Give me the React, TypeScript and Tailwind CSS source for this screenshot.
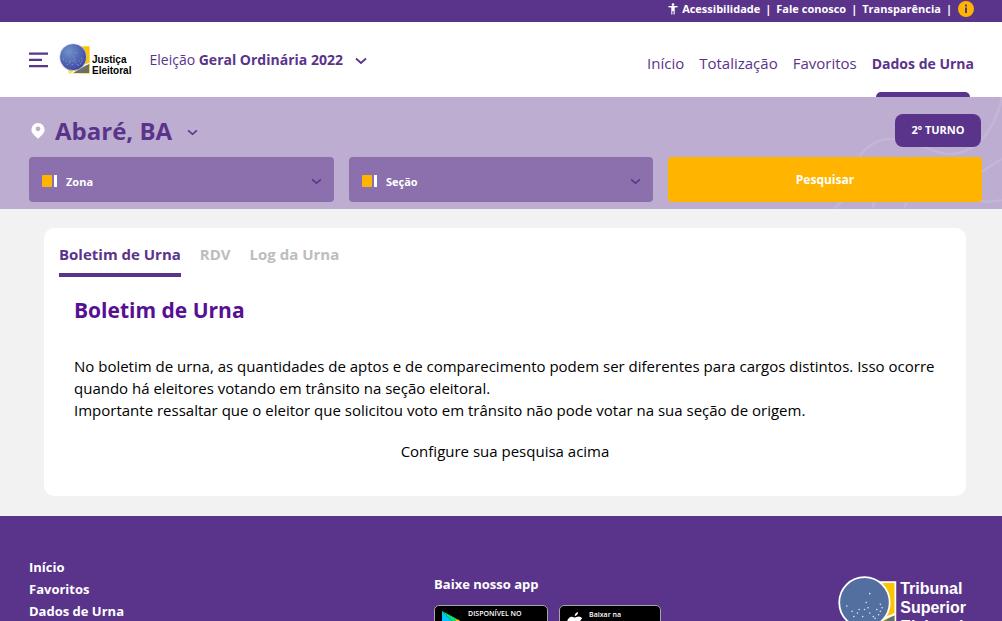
import type { ReactNode } from "react";

function Chevron({ className }: { className: string }) {
  return (
    <svg viewBox="0 0 12 8" className={className} fill="none" stroke="currentColor" strokeWidth="1.800" aria-hidden="true">
      <path d="M1 1.500 6 6l5-4.500" />
    </svg>
  );
}

const stars = [
  [8, 20], [11, 21], [15, 19], [14, 23], [18, 21], [20, 23], [22, 19], [23, 22], [24, 20], [25, 18],
  [16, 15], [17, 18], [9, 23], [5, 17], [18, 10], [21, 24], [24, 16], [12, 19],
];

function Emblem({ id, className, outline }: { id: string; className: string; outline?: boolean }) {
  return (
    <svg viewBox="0 0 34 34" className={className} aria-hidden="true">
      <defs>
        <linearGradient id={`${id}-gold`} x1="0" y1="0" x2="1" y2="0">
          <stop offset="0.300" stopColor="#fede55" />
          <stop offset="0.800" stopColor="#fcc400" />
        </linearGradient>
        <radialGradient id={`${id}-globe`} cx="0.350" cy="0.300" r="0.800">
          <stop offset="0" stopColor="#7092cc" />
          <stop offset="1" stopColor="#39409a" />
        </radialGradient>
      </defs>
      <path d="M10 3.500h22.500v29H10z" fill={`url(#${id}-gold)`} stroke={outline ? "#fff" : "none"} />
      <path d="M32 22v10H15z" fill="#64716e" />
      <path d="M32.500 21.500C25 24 20 27 13 32.500" fill="none" stroke="#fff" strokeWidth="1.200" />
      <circle cx="15" cy="15" r="14.300" fill={outline ? "#536f9f" : `url(#${id}-globe)`} stroke="#fff" strokeWidth={outline ? 1 : 0.500} />
      {stars.map(([x, y]) => (
        <circle key={`${x}-${y}`} cx={x} cy={y} r="0.450" fill="#dfe9f5" />
      ))}
    </svg>
  );
}

function FilterSelect({ label }: { label: string }) {
  return (
    <div className="relative flex h-[45px] items-center rounded-[4px] bg-[#8b70ad]">
      <span className="pointer-events-none absolute left-[13px] flex gap-[2px] pt-[3px]">
        <span className="h-3 w-[10px] rounded-[1px] bg-[#ffb400]" />
        <span className="h-3 w-[3px] bg-white" />
      </span>
      <select aria-label={label} className="h-full w-full appearance-none bg-transparent pt-[5px] pr-8 pl-[37px] text-[11px] font-bold text-white">
        <option>{label}</option>
      </select>
      <Chevron className="pointer-events-none absolute right-3 mt-[3px] h-[7px] w-[11px] text-[#5a348a]" />
    </div>
  );
}

function TopLink({ children }: { children: ReactNode }) {
  return <a href="#" className="whitespace-nowrap">{children}</a>;
}

function StoreBadge({ small, name, className, children }: { small: string; name: string; className: string; children: ReactNode }) {
  return (
    <a href="#" className={`flex h-[34px] items-start rounded-[5px] border border-[#a6a6a6] bg-black text-white ${className}`}>
      {children}
      <span className="flex flex-col">
        <span className="text-[7px] leading-[9px] font-semibold whitespace-nowrap">{small}</span>
        <span className="text-[15px] leading-[16px] font-semibold whitespace-nowrap">{name}</span>
      </span>
    </a>
  );
}

export default function App() {
  return (
    <div className="flex h-screen flex-col overflow-y-auto bg-[#f2f2f2] font-['Open_Sans',sans-serif] text-[#5a348a] [scrollbar-width:none]">
      <div className="flex h-[22px] shrink-0 items-center justify-end gap-[5px] bg-[#5a348a] pr-7 pb-1 text-[11px] font-bold text-white">
        <a href="#" className="flex items-center gap-1">
          <svg viewBox="0 0 10 12" className="h-3 w-[10px]" fill="currentColor" aria-hidden="true">
            <circle cx="5" cy="1.600" r="1.300" />
            <path d="M0.400 3h9.200v1.200L6.700 4.600V11.500H5.600V8H4.400v3.500H3.300V4.600L0.400 4.200z" />
          </svg>
          Acessibilidade
        </a>
        <span>|</span>
        <TopLink>Fale conosco</TopLink>
        <span>|</span>
        <TopLink>Transparência</TopLink>
        <span>|</span>
        <button aria-label="Informações" className="ml-px">
          <svg viewBox="0 0 16 16" className="size-4" aria-hidden="true">
            <circle cx="8" cy="8" r="8" fill="#ffb400" />
            <path d="M7 3.500h2v2H7zM7 6.500h2v5.500H7z" fill="#5a348a" />
          </svg>
        </button>
      </div>

      <header className="flex h-[75px] shrink-0 justify-between bg-white pr-7 pl-[29px]">
        <div className="flex items-center">
          <button aria-label="Menu">
            <svg viewBox="0 0 19 16" className="h-4 w-[19px]" fill="currentColor" aria-hidden="true">
              <path d="M0 0.500h19v2.200H0zM0 6.800h13v2.200H0zM0 13h19v2.200H0z" />
            </svg>
          </button>
          <a href="#" className="ml-[11px] flex items-center pb-px text-black">
            <Emblem id="header" className="size-8" />
            <span className="pt-3 pl-px font-['Liberation_Sans',sans-serif] text-[10px] leading-[11px] font-bold">
              Justiça<br />Eleitoral
            </span>
          </a>
          <button className="ml-[18px] flex items-center gap-3 text-[14px]">
            <span>Eleição <b>Geral Ordinária 2022</b></span>
            <Chevron className="mt-[3px] h-[8px] w-3" />
          </button>
        </div>
        <nav className="flex items-stretch gap-[15px] text-[15px] whitespace-nowrap">
          <a href="#" className="flex items-center pt-2">Início</a>
          <a href="#" className="flex items-center pt-2">Totalização</a>
          <a href="#" className="flex items-center pt-2">Favoritos</a>
          <a href="#" className="relative flex items-center pt-2 text-[14px] font-bold">
            Dados de Urna
            <span className="absolute inset-x-1 bottom-0 h-[5px] rounded-t-[5px] bg-[#5a348a]" />
          </a>
        </nav>
      </header>

      <section className="relative shrink-0 bg-[#bdadd1] pr-5 pb-[7px] pl-[29px]">
        <svg viewBox="0 0 180 112" className="absolute top-0 right-0 h-28 w-[180px]" fill="none" stroke="#c4b6d7" strokeWidth="2.500" aria-hidden="true">
          <path d="M36 62C46 45 64 37 88 45S123 62 143 54 175 24 180 0M12 112C27 98 35 84 50 75M50 112C56 91 68 80 82 76S113 89 135 85 164 70 180 62M82 112C91 86 112 87 128 94S158 108 180 103" />
        </svg>
        <div className="relative flex h-[60px] items-center justify-between pt-[7px] pr-px">
          <button className="flex items-center text-[24px] font-bold">
            <svg viewBox="0 0 14 16" className="ml-[2px] h-4 w-[14px] text-white" aria-hidden="true">
              <path fillRule="evenodd" d="M7 0a6.600 6.600 0 0 0-6.600 6.600C0.400 10 3.200 12.500 7 15.800c3.800-3.300 6.600-5.800 6.600-9.200A6.600 6.600 0 0 0 7 0zm0 3.400a2.400 2.400 0 1 1 0 4.800 2.400 2.400 0 0 1 0-4.800z" fill="currentColor" />
            </svg>
            <span className="ml-[10px]">Abaré, BA</span>
            <Chevron className="mt-1 ml-[15px] h-[7px] w-[11px]" />
          </button>
          <button className="h-[33px] w-[86px] rounded-[8px] bg-[#5a348a] text-[11px] font-bold text-white">2º TURNO</button>
        </div>
        <form className="relative grid grid-cols-[305fr_304fr_314fr] gap-[15px]">
          <FilterSelect label="Zona" />
          <FilterSelect label="Seção" />
          <button type="button" className="rounded-[4px] bg-[#ffb400] text-[12px] font-bold text-white">Pesquisar</button>
        </form>
      </section>

      <main className="mx-9 mt-[19px] mb-5 ml-11 shrink-0 rounded-[10px] bg-white px-[15px] pt-[15px] pb-[34px]">
        <div role="tablist" className="flex gap-[19px] text-[15px] font-bold">
          <button role="tab" aria-selected="true" className="h-[34px] border-b-4 border-[#5a348a] pb-[7px]">Boletim de Urna</button>
          <button role="tab" aria-selected="false" className="h-[34px] pb-[11px] text-[#bdbdbd]">RDV</button>
          <button role="tab" aria-selected="false" className="h-[34px] pb-[11px] text-[#bdbdbd]">Log da Urna</button>
        </div>
        <div className="px-[15px] text-[15px] leading-[22px] text-black">
          <h1 className="mt-[17px] text-[21px] leading-8 font-bold text-[#570f93]">Boletim de Urna</h1>
          <p className="mt-[29px]">
            No boletim de urna, as quantidades de aptos e de comparecimento podem ser diferentes para cargos distintos. Isso ocorre quando há eleitores votando em trânsito na seção eleitoral.
            <br />
            Importante ressaltar que o eleitor que solicitou voto em trânsito não pode votar na sua seção de origem.
          </p>
          <p className="mt-[19px] text-center">Configure sua pesquisa acima</p>
        </div>
      </main>

      <footer className="grid shrink-0 grid-cols-[405fr_404fr_auto] items-start bg-[#5a348a] pt-10 pr-9 pb-10 pl-[29px] text-white">
        <nav className="flex flex-col items-start text-[13px] leading-[22px] font-bold">
          <a href="#">Início</a>
          <a href="#">Favoritos</a>
          <a href="#">Dados de Urna</a>
        </nav>
        <div className="pt-[17px]">
          <h2 className="text-[13px] leading-[22px] font-bold">Baixe nosso app</h2>
          <div className="mt-[10px] flex gap-[11px]">
            <StoreBadge small="DISPONÍVEL NO" name="Google Play" className="w-[114px] gap-[6px] pt-[3px] pl-[7px]">
              <svg viewBox="0 0 20 22" className="mt-[2px] h-[22px] w-5 shrink-0" aria-hidden="true">
                <path d="M0 0v22L11 11z" fill="#00c3ff" />
                <path d="M0 0 15 8 11 11z" fill="#00e676" />
                <path d="m15 8 5 3-5 3-4-3z" fill="#ffc107" />
                <path d="M0 22 15 14l-4-3z" fill="#ff3a44" />
              </svg>
            </StoreBadge>
            <StoreBadge small="Baixar na" name="App Store" className="w-[102px] gap-[6px] pt-[4px] pl-[7px]">
              <svg viewBox="0 0 16 20" className="mt-[2px] h-5 w-4 shrink-0" fill="currentColor" aria-hidden="true">
                <path d="M11 0c.2 2-1.500 4-3.300 4C7.500 2.200 9.200.3 11 0zM8 5.500c1 0 2-.9 3.700-.9 1.500 0 2.800.8 3.500 1.900-3 1.800-2.500 6 .7 7.200C15 16.500 13.500 19 12 19c-1.300 0-1.800-.8-3.500-.8S6.200 19 5 19C2.500 19 0 14.500 0 11c0-4 2.500-6.300 4.800-6.300 1.400 0 2.400.8 3.200.8z" />
              </svg>
            </StoreBadge>
          </div>
        </div>
        <a href="#" className="flex items-start pt-5">
          <Emblem id="footer" outline className="size-[60px]" />
          <span className="pt-[3px] pl-[2px] font-['Liberation_Sans',sans-serif] text-[16px] leading-[19px] font-bold">
            Tribunal<br />Superior<br />Eleitoral
          </span>
        </a>
      </footer>
    </div>
  );
}
